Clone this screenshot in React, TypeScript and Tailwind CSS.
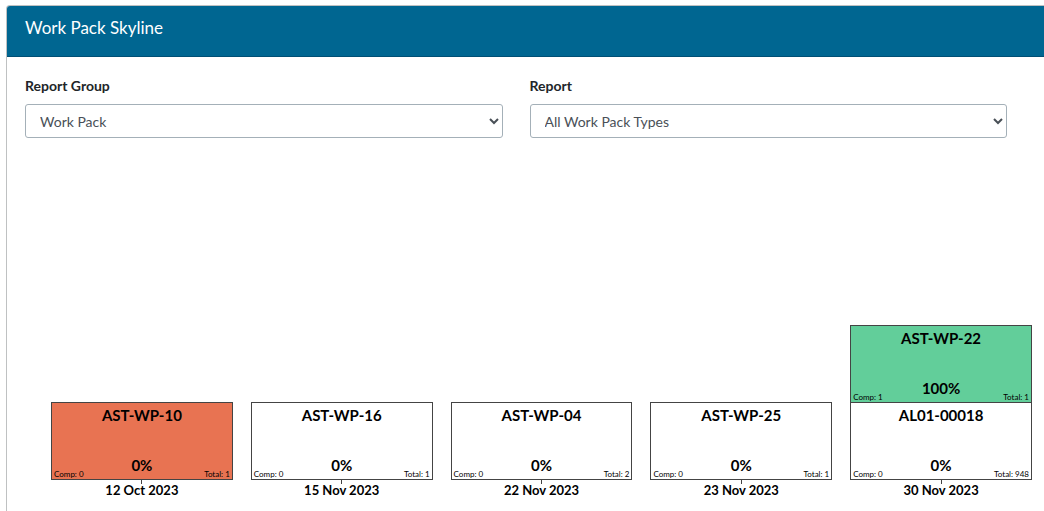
import React from 'react';

type WorkPack = { name: string; percent: number; complete: number; total: number; tone: string };
type Column = { date: string; packs: WorkPack[] };

const OPEN = 'bg-white';
const LATE = 'bg-[#e87352]';
const DONE = 'bg-[#62ce9a]';

const columns: Column[] = [
  { date: '12 Oct 2023', packs: [{ name: 'AST-WP-10', percent: 0, complete: 0, total: 1, tone: LATE }] },
  { date: '15 Nov 2023', packs: [{ name: 'AST-WP-16', percent: 0, complete: 0, total: 1, tone: OPEN }] },
  { date: '22 Nov 2023', packs: [{ name: 'AST-WP-04', percent: 0, complete: 0, total: 2, tone: OPEN }] },
  { date: '23 Nov 2023', packs: [{ name: 'AST-WP-25', percent: 0, complete: 0, total: 1, tone: OPEN }] },
  {
    date: '30 Nov 2023',
    packs: [
      { name: 'AST-WP-22', percent: 100, complete: 1, total: 1, tone: DONE },
      { name: 'AL01-00018', percent: 0, complete: 0, total: 948, tone: OPEN },
    ],
  },
];

function SelectField({ id, label, options }: { id: string; label: string; options: string[] }) {
  return (
    <div className="min-w-0 flex-1">
      <label htmlFor={id} className="block text-sm leading-5 font-bold text-[#212529]">
        {label}
      </label>
      <select
        id={id}
        className="mt-2 block h-[34px] w-full rounded-[3px] border border-[#a4b0b8] bg-white pl-2.5 text-sm text-[#495057]"
      >
        {options.map((option) => (
          <option key={option}>{option}</option>
        ))}
      </select>
    </div>
  );
}

function PackCard({ pack }: { pack: WorkPack }) {
  return (
    <li
      className={`-mt-px flex h-[78px] flex-col justify-between border border-[#444444] px-0.5 pt-0.5 text-center text-[15px] leading-5 font-bold text-black ${pack.tone}`}
    >
      <span>{pack.name}</span>
      <div className="grid grid-cols-[1fr_auto_1fr] items-end">
        <span className="pb-px text-left text-[8px] leading-2 font-normal">Comp: {pack.complete}</span>
        <span className="pb-1">{pack.percent}%</span>
        <span className="pb-px text-right text-[8px] leading-2 font-normal">Total: {pack.total}</span>
      </div>
    </li>
  );
}

export default function App() {
  return (
    <div className="min-h-screen overflow-hidden bg-white pt-[5px] pl-1.5 font-['Lato','Noto_Sans',sans-serif]">
      <section className="min-h-[506px] rounded-tl-[4px] border-t border-l border-[#bfc1c2]">
        <header className="rounded-tl-[3px] border-b border-[#004f75] bg-[#006691] px-[18px] pt-2.5 pb-4">
          <h1 className="text-[17px] leading-6 text-white">Work Pack Skyline</h1>
        </header>
        <form className="flex gap-[27px] pt-[19px] pr-[37px] pl-[18px]">
          <SelectField id="report-group" label="Report Group" options={['Work Pack']} />
          <SelectField id="report" label="Report" options={['All Work Pack Types']} />
        </form>
        <div className="mt-[188px] flex items-end gap-[18px] pr-3 pl-11">
          {columns.map((column) => (
            <div key={column.date} className="flex min-w-0 flex-1 flex-col">
              <ul>
                {column.packs.map((pack) => (
                  <PackCard key={pack.name} pack={pack} />
                ))}
              </ul>
              <div className="h-1 w-px self-center bg-[#444444]" />
              <p className="-mt-1 text-center text-[13px] leading-5 font-bold text-black">{column.date}</p>
            </div>
          ))}
        </div>
      </section>
    </div>
  );
}
